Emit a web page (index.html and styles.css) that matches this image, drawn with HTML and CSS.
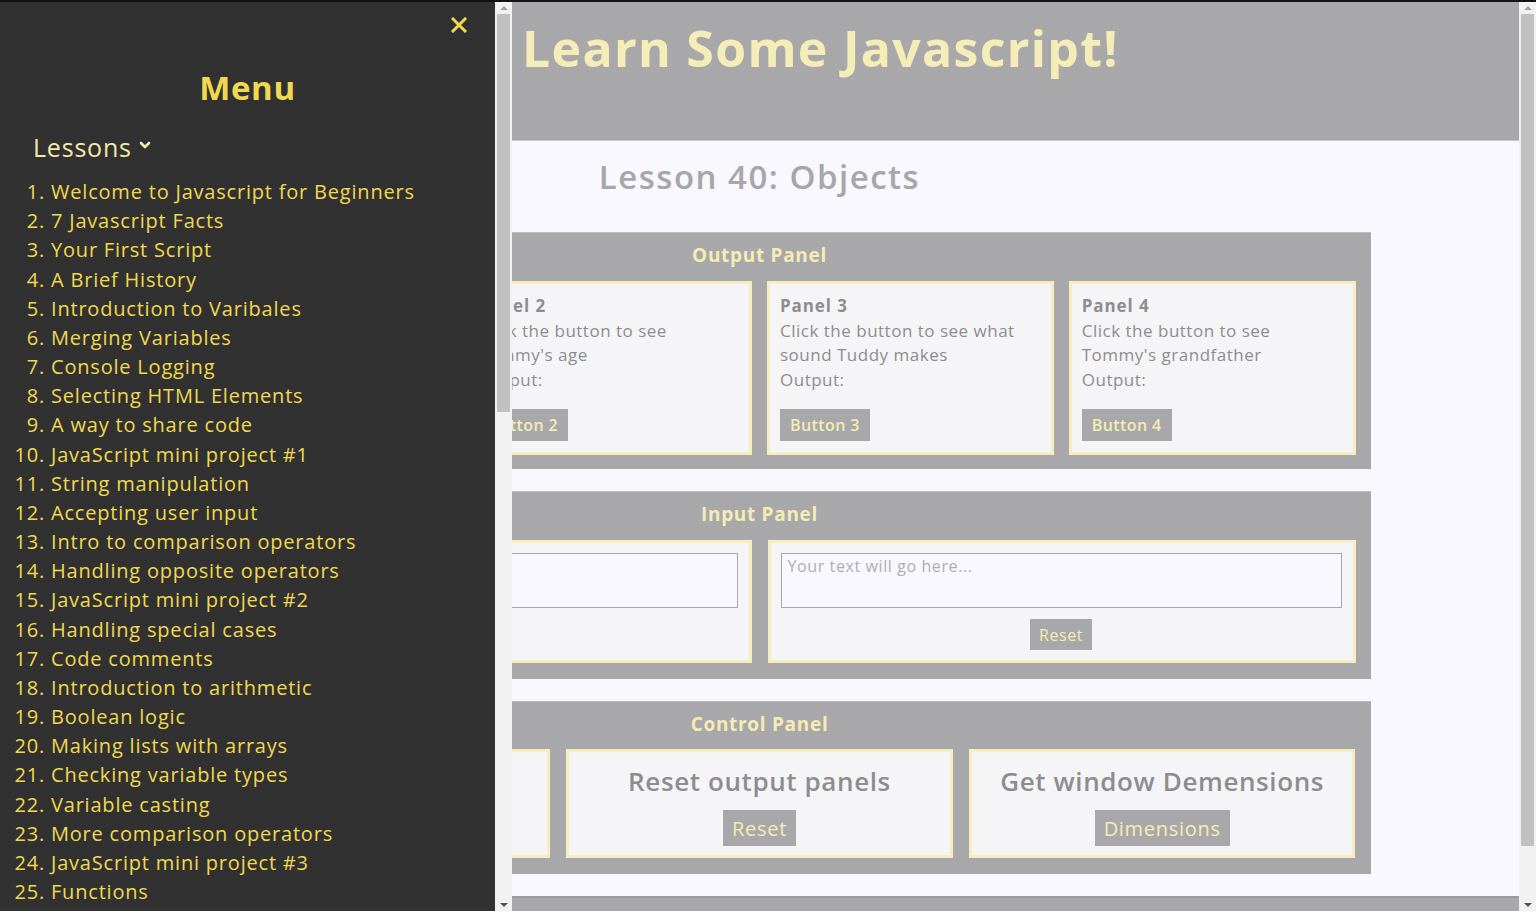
FILE: index.html
```html
<!DOCTYPE html>
<html lang="en">
<head>
<meta charset="utf-8">
<title>Learn Some Javascript!</title>
<link rel="stylesheet" href="styles.css">
</head>
<body>
<div class="topline"></div>
<div class="viewport">
  <div class="page">
    <header class="site-header">
      <h1 class="site-title">Learn Some Javascript!</h1>
    </header>
    <main class="content">
      <h2 class="lesson-title">Lesson 40: Objects</h2>

      <section class="box box-output">
        <h3 class="box-title">Output Panel</h3>
        <div class="row row-4">
          <div class="card card-out">
            <p class="card-head">Panel 1</p>
            <p>Click the button to see</p>
            <p>Tommy's name</p>
            <p>Output:</p>
            <button class="btn">Button 1</button>
          </div>
          <div class="card card-out">
            <p class="card-head">Panel 2</p>
            <p>Click the button to see</p>
            <p>Tommy's age</p>
            <p>Output:</p>
            <button class="btn">Button 2</button>
          </div>
          <div class="card card-out">
            <p class="card-head">Panel 3</p>
            <p>Click the button to see what</p>
            <p>sound Tuddy makes</p>
            <p>Output:</p>
            <button class="btn">Button 3</button>
          </div>
          <div class="card card-out">
            <p class="card-head">Panel 4</p>
            <p>Click the button to see</p>
            <p>Tommy's grandfather</p>
            <p>Output:</p>
            <button class="btn">Button 4</button>
          </div>
        </div>
      </section>

      <section class="box box-input">
        <h3 class="box-title">Input Panel</h3>
        <div class="row row-2">
          <div class="card card-input">
            <textarea class="text-in" placeholder="Type something..."></textarea>
            <button class="btn btn-small">Submit</button>
          </div>
          <div class="card card-input">
            <textarea class="text-in" placeholder="Your text will go here..."></textarea>
            <button class="btn btn-small">Reset</button>
          </div>
        </div>
      </section>

      <section class="box box-control">
        <h3 class="box-title">Control Panel</h3>
        <div class="row row-3">
          <div class="card card-ctrl">
            <p class="ctrl-head">Change the theme</p>
            <button class="btn btn-big">Theme</button>
          </div>
          <div class="card card-ctrl">
            <p class="ctrl-head">Reset output panels</p>
            <button class="btn btn-big">Reset</button>
          </div>
          <div class="card card-ctrl">
            <p class="ctrl-head">Get window Demensions</p>
            <button class="btn btn-big">Dimensions</button>
          </div>
        </div>
      </section>
    </main>
    <footer class="site-footer"></footer>
  </div>
  <div class="scrollbar">
    <div class="sb-arrow"><span class="tri-up"></span></div>
    <div class="sb-thumb sb-thumb-main"></div>
    <div class="sb-track"></div>
    <div class="sb-arrow"><span class="tri-down"></span></div>
  </div>
</div>

<nav class="sidebar">
  <div class="sidebar-body">
    <div class="close-row">
      <svg class="close-icon" width="16" height="16" viewBox="0 0 16 16" aria-label="Close">
        <path d="M2 2 L14 14 M14 2 L2 14" stroke="#f0d94f" stroke-width="3" stroke-linecap="square" fill="none"/>
      </svg>
    </div>
    <h2 class="menu-title">Menu</h2>
    <div class="lessons-toggle">Lessons
      <svg class="chev" width="12" height="9" viewBox="0 0 12 9"><path d="M2 2 L6 6 L10 2" stroke="#f3e9a8" stroke-width="2.6" fill="none" stroke-linecap="round" stroke-linejoin="round"/></svg>
    </div>
    <ol class="lesson-list">
      <li>Welcome to Javascript for Beginners</li>
      <li>7 Javascript Facts</li>
      <li>Your First Script</li>
      <li>A Brief History</li>
      <li>Introduction to Varibales</li>
      <li>Merging Variables</li>
      <li>Console Logging</li>
      <li>Selecting HTML Elements</li>
      <li>A way to share code</li>
      <li>JavaScript mini project #1</li>
      <li>String manipulation</li>
      <li>Accepting user input</li>
      <li>Intro to comparison operators</li>
      <li>Handling opposite operators</li>
      <li>JavaScript mini project #2</li>
      <li>Handling special cases</li>
      <li>Code comments</li>
      <li>Introduction to arithmetic</li>
      <li>Boolean logic</li>
      <li>Making lists with arrays</li>
      <li>Checking variable types</li>
      <li>Variable casting</li>
      <li>More comparison operators</li>
      <li>JavaScript mini project #3</li>
      <li>Functions</li>
    </ol>
  </div>
  <div class="scrollbar">
    <div class="sb-arrow"><span class="tri-up"></span></div>
    <div class="sb-thumb sb-thumb-side"></div>
    <div class="sb-track"></div>
    <div class="sb-arrow"><span class="tri-down"></span></div>
  </div>
</nav>
</body>
</html>
```

FILE: styles.css
```css
* { box-sizing: border-box; }
html, body { margin: 0; padding: 0; height: 100%; overflow: hidden; }
body {
  font-family: "Open Sans", "Noto Sans", "DejaVu Sans", sans-serif;
  background: #111;
}
.topline { height: 2px; background: #121212; }

.viewport {
  display: flex;
  height: 909px;
}
.page {
  flex: 1;
  display: flex;
  flex-direction: column;
  background: #f8f8fe;
  overflow: hidden;
}

/* header */
.site-header {
  height: 139px;
  flex: none;
  background: #a8a8aa;
  box-shadow: inset 0 -1px 0 #c6c6c8;
  padding: 14px 0 0 522px;
}
.site-title {
  margin: 0;
  font-size: 50px;
  font-weight: 700;
  line-height: 1.3;
  color: #f5edb7;
  letter-spacing: 1.3px;
}

.content { flex: none; }
.lesson-title {
  margin: 0;
  height: 91px;
  padding-top: 15px;
  text-align: center;
  font-size: 33px;
  font-weight: 600;
  line-height: 42px;
  letter-spacing: 1.5px;
  color: #a7a7aa;
}

/* boxes */
.box {
  width: 1222px;
  margin: 0 auto 22px;
  background: #a8a8aa;
  box-shadow: inset 0 1px 0 #bcbcbe;
  padding: 0 15px 16px;
}
.box-output { padding-bottom: 14px; }
.box-title {
  margin: 0;
  height: 49px;
  line-height: 47px;
  text-align: center;
  font-size: 19px;
  font-weight: 700;
  letter-spacing: 0.7px;
  color: #f5ecb4;
}
.box-control .box-title { height: 48px; line-height: 46px; }
.row { display: grid; gap: 15px; }
.row-4 { grid-template-columns: repeat(4, 1fr); }
.row-2 { grid-template-columns: repeat(2, 1fr); gap: 16px; }
.row-3 { grid-template-columns: repeat(3, 1fr); gap: 16px; }

.card {
  background: #f5f5f7;
  border: 3px solid #f6eec1;
  padding: 10px;
  color: #8d8d90;
  font-size: 17px;
  letter-spacing: 0.5px;
}
.card-out { height: 174px; }
.card p { margin: 0; line-height: 24.5px; white-space: nowrap; }
.card .card-head { font-weight: 700; letter-spacing: 0.9px; }

.btn {
  display: inline-block;
  margin-top: 17px;
  border: none;
  background: #a8a8aa;
  color: #f5ecb4;
  font-family: inherit;
  font-size: 16px;
  font-weight: 600;
  letter-spacing: 0.4px;
  height: 32px;
  padding: 0 10px;
}

.card-input {
  height: 123px;
  display: flex;
  flex-direction: column;
  align-items: center;
  padding: 10px 11px 10px 10px;
}
.text-in {
  width: 100%;
  height: 55px;
  flex: none;
  resize: none;
  border: 1px solid #a6a6a9;
  background: #f8f8fe;
  font-family: inherit;
  font-size: 16px;
  letter-spacing: 0.6px;
  padding: 1px 6px;
  color: #888;
}
.text-in::placeholder { color: #aeaeb1; }
.btn-small {
  margin-top: 11px;
  height: 31px;
  font-size: 16px;
  font-weight: 500;
  letter-spacing: 0.6px;
  padding: 0 9px;
}

.card-ctrl {
  height: 109px;
  text-align: center;
  padding: 13px 10px 9px;
}
.card-ctrl .ctrl-head {
  font-size: 26px;
  font-weight: 600;
  line-height: 32px;
  letter-spacing: 0.6px;
  color: #8d8d90;
}
.btn-big {
  margin-top: 13px;
  height: 36px;
  font-size: 20px;
  font-weight: 500;
  letter-spacing: 0.7px;
  padding: 0 9px;
}

.site-footer {
  flex: 1;
  min-height: 20px;
  background: #a8a8aa;
  box-shadow: inset 0 2px 0 #9c9c9e;
}

/* scrollbars */
.scrollbar {
  width: 17px;
  flex: none;
  display: flex;
  flex-direction: column;
  background: #f1f1f1;
}
.sb-arrow {
  height: 12px;
  flex: none;
  display: flex;
  align-items: center;
  justify-content: center;
}
.tri-up, .tri-down {
  width: 0; height: 0;
  border-left: 4px solid transparent;
  border-right: 4px solid transparent;
}
.tri-up { border-bottom: 4px solid #a3a3a3; }
.tri-down { border-top: 4px solid #505050; }
.sb-thumb {
  flex: none;
  margin: 0 2px;
  background: #c1c1c1;
}
.sb-thumb-main { height: 832px; }
.sb-thumb-side { height: 398px; }
.sb-track { flex: 1; }

/* sidebar overlay */
.sidebar {
  position: fixed;
  top: 2px;
  left: 0;
  width: 512px;
  height: 909px;
  display: flex;
}
.sidebar-body {
  flex: 1;
  background: #313131;
  overflow: hidden;
}
.close-row {
  display: flex;
  justify-content: flex-end;
  padding: 15px 28px 0 0;
  height: 32px;
}
.menu-title {
  margin: 34px 0 0;
  text-align: center;
  font-size: 33px;
  font-weight: 700;
  line-height: 40px;
  letter-spacing: 0.6px;
  color: #f0d94f;
}
.lessons-toggle {
  margin: 23px 0 0 33px;
  font-size: 25px;
  line-height: 32px;
  letter-spacing: 0.8px;
  color: #f3e9a8;
  display: flex;
  align-items: center;
  gap: 7px;
}
.chev { margin-top: -4px; }
.lesson-list {
  margin: 14px 0 0;
  padding-left: 51px;
  font-size: 20px;
  font-weight: 500;
  line-height: 29.17px;
  letter-spacing: 0.8px;
  color: #f0d94f;
}
.lesson-list li { padding-left: 0; }
```
